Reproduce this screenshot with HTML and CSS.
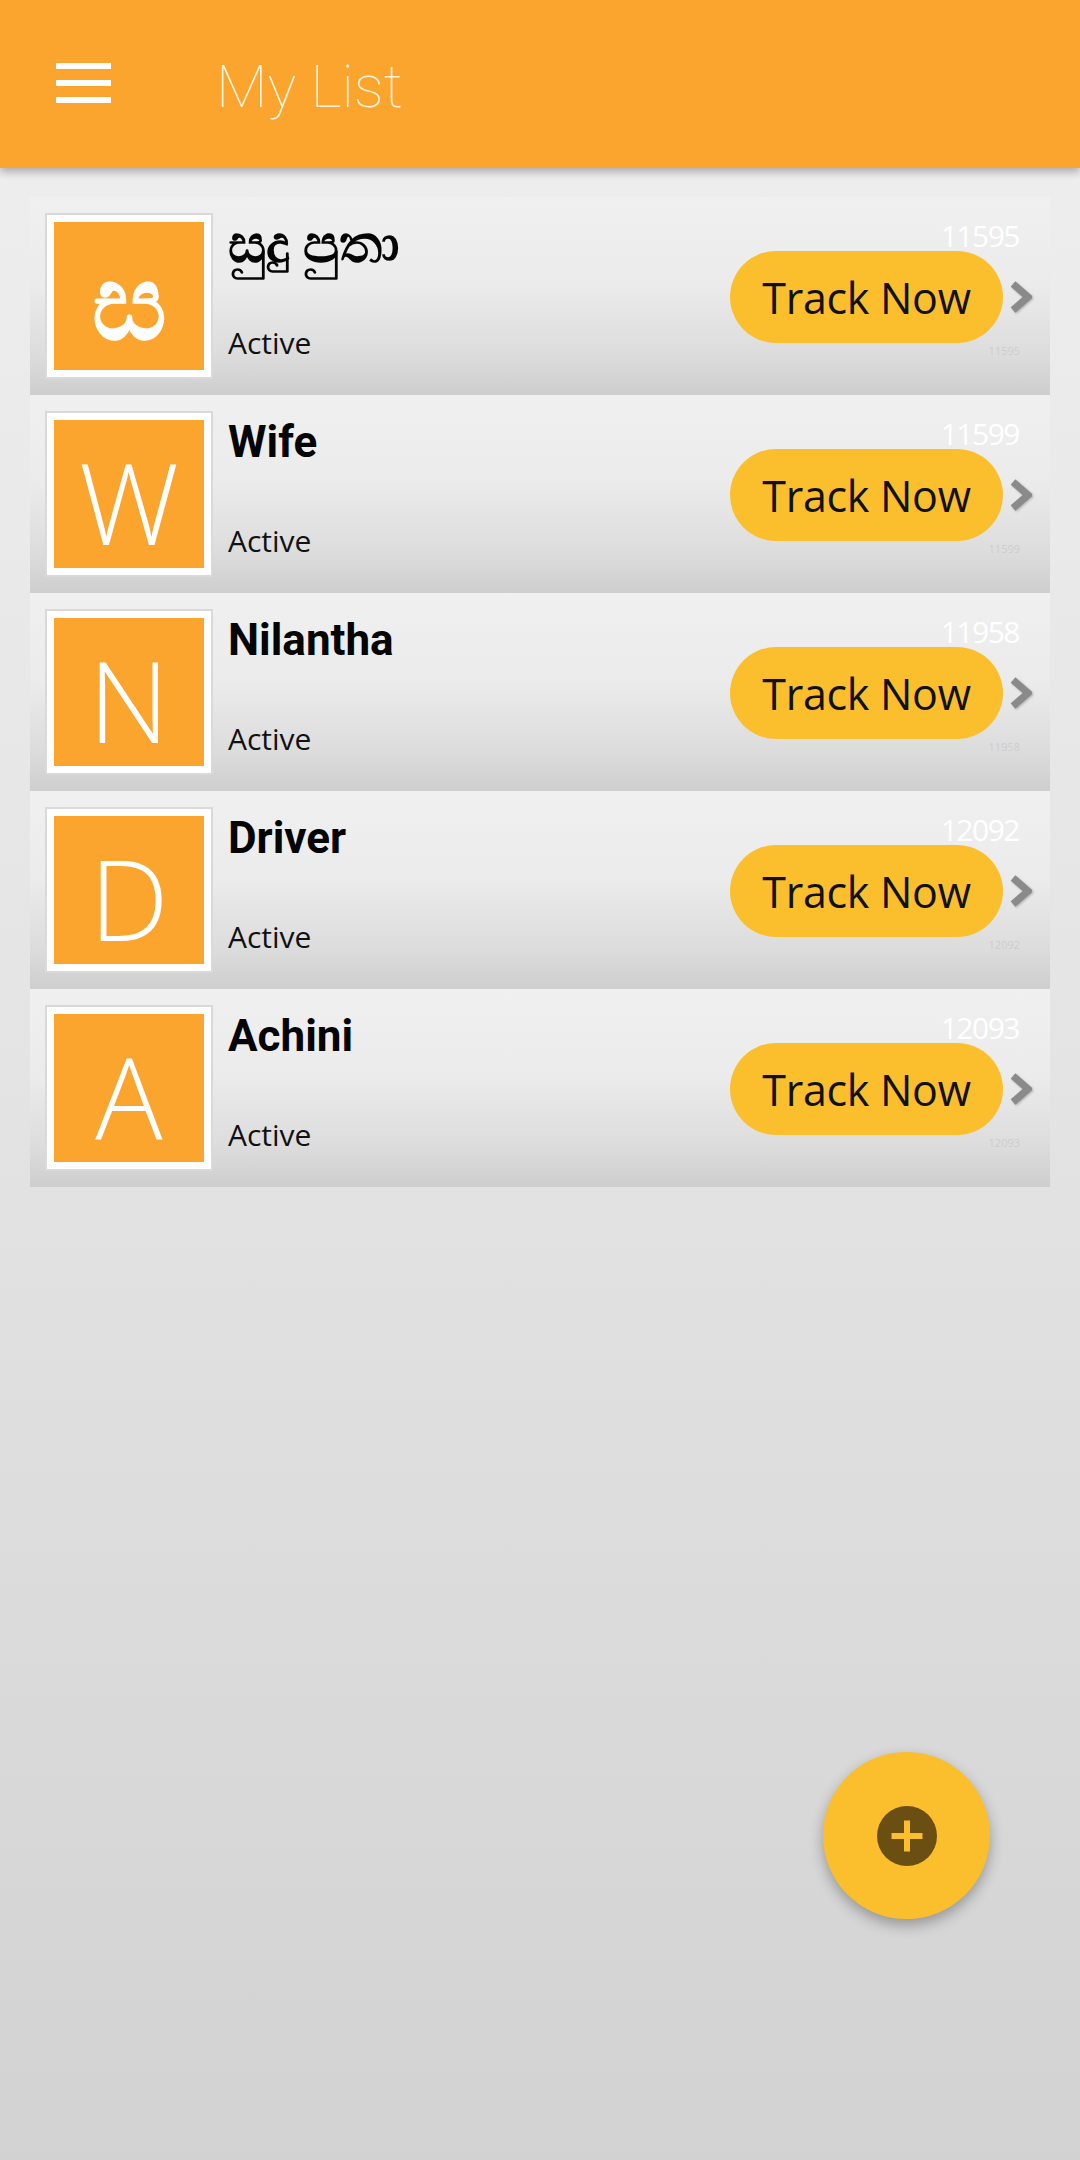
FILE: index.html
```html
<!DOCTYPE html>
<html lang="si">
<head>
<meta charset="utf-8">
<title>My List</title>
<link rel="stylesheet" href="styles.css">
</head>
<body>
<header class="appbar">
  <div class="menu" aria-label="Menu"><span></span><span></span><span></span></div>
  <h1 class="title">My List</h1>
</header>

<main class="list">
  <div class="row">
    <div class="avatar"><div class="avatar-inner avatar-si">ස</div></div>
    <div class="info">
      <div class="name name-si">සුදු පුතා</div>
      <div class="status">Active</div>
    </div>
    <div class="actions">
      <div class="num"><span>11595</span></div>
      <div class="btnrow">
        <button class="track">Track Now</button>
        <svg class="chev" viewBox="0 0 22 32" width="22" height="32"><polyline points="3,3 18,16 3,29" fill="none" stroke="#8a8a8a" stroke-width="7" stroke-linejoin="miter"/></svg>
      </div>
      <div class="tiny">11595</div>
    </div>
  </div>

  <div class="row">
    <div class="avatar"><div class="avatar-inner">W</div></div>
    <div class="info">
      <div class="name">Wife</div>
      <div class="status">Active</div>
    </div>
    <div class="actions">
      <div class="num"><span>11599</span></div>
      <div class="btnrow">
        <button class="track">Track Now</button>
        <svg class="chev" viewBox="0 0 22 32" width="22" height="32"><polyline points="3,3 18,16 3,29" fill="none" stroke="#8a8a8a" stroke-width="7" stroke-linejoin="miter"/></svg>
      </div>
      <div class="tiny">11599</div>
    </div>
  </div>

  <div class="row">
    <div class="avatar"><div class="avatar-inner">N</div></div>
    <div class="info">
      <div class="name">Nilantha</div>
      <div class="status">Active</div>
    </div>
    <div class="actions">
      <div class="num"><span>11958</span></div>
      <div class="btnrow">
        <button class="track">Track Now</button>
        <svg class="chev" viewBox="0 0 22 32" width="22" height="32"><polyline points="3,3 18,16 3,29" fill="none" stroke="#8a8a8a" stroke-width="7" stroke-linejoin="miter"/></svg>
      </div>
      <div class="tiny">11958</div>
    </div>
  </div>

  <div class="row">
    <div class="avatar"><div class="avatar-inner">D</div></div>
    <div class="info">
      <div class="name">Driver</div>
      <div class="status">Active</div>
    </div>
    <div class="actions">
      <div class="num"><span>12092</span></div>
      <div class="btnrow">
        <button class="track">Track Now</button>
        <svg class="chev" viewBox="0 0 22 32" width="22" height="32"><polyline points="3,3 18,16 3,29" fill="none" stroke="#8a8a8a" stroke-width="7" stroke-linejoin="miter"/></svg>
      </div>
      <div class="tiny">12092</div>
    </div>
  </div>

  <div class="row">
    <div class="avatar"><div class="avatar-inner">A</div></div>
    <div class="info">
      <div class="name">Achini</div>
      <div class="status">Active</div>
    </div>
    <div class="actions">
      <div class="num"><span>12093</span></div>
      <div class="btnrow">
        <button class="track">Track Now</button>
        <svg class="chev" viewBox="0 0 22 32" width="22" height="32"><polyline points="3,3 18,16 3,29" fill="none" stroke="#8a8a8a" stroke-width="7" stroke-linejoin="miter"/></svg>
      </div>
      <div class="tiny">12093</div>
    </div>
  </div>
</main>

<button class="fab" aria-label="Add">
  <svg viewBox="0 0 60 60" width="60" height="60">
    <circle cx="30" cy="30" r="30" fill="#6b4f12"/>
    <rect x="14.5" y="27" width="31" height="6" fill="#fbbf2e"/>
    <rect x="27" y="14.5" width="6" height="31" fill="#fbbf2e"/>
  </svg>
</button>
</body>
</html>
```

FILE: styles.css
```css
* { box-sizing: border-box; }

html, body {
  margin: 0;
  padding: 0;
}

body {
  width: 1080px;
  min-height: 2160px;
  position: relative;
  background: linear-gradient(to bottom, #efefef 0%, #e4e4e4 50%, #d2d2d2 100%);
  font-family: "Open Sans", "Liberation Sans", sans-serif;
  color: #111;
}

.appbar {
  height: 168px;
  background: #fba52e;
  display: flex;
  align-items: center;
  padding-left: 56px;
  box-shadow: 0 4px 8px rgba(0, 0, 0, 0.28);
  position: relative;
  z-index: 2;
}

.menu {
  width: 55px;
  display: flex;
  flex-direction: column;
  gap: 11px;
  margin-top: -2px;
}

.menu span {
  display: block;
  height: 6px;
  background: #fff;
}

.title {
  margin: 6px 0 0 105px;
  font-family: Roboto, "Liberation Sans", sans-serif;
  font-weight: 100;
  font-size: 60px;
  line-height: 1;
  color: #fdf4de;
}

.list {
  margin: 29px 30px 0 30px;
  display: flex;
  flex-direction: column;
}

.row {
  height: 198px;
  display: flex;
  padding: 16px 18px 16px 15px;
  background: linear-gradient(to bottom, #f0f0f0 0%, #ebebeb 45%, #dcdcdc 80%, #cecece 100%);
}

.avatar {
  width: 168px;
  height: 166px;
  border: 2px solid #d9d9d9;
  background: #fff;
  padding: 7px;
  flex: none;
}

.avatar-inner {
  width: 100%;
  height: 100%;
  background: #fba52e;
  color: #fff;
  display: flex;
  align-items: center;
  justify-content: center;
  font-family: "Open Sans", "Liberation Sans", sans-serif;
  font-weight: 300;
  font-size: 112px;
  line-height: 1;
  padding-top: 16px;
}

.avatar-si {
  font-weight: 700;
  font-size: 104px;
  padding-top: 6px;
}

.info {
  flex: 1;
  margin-left: 15px;
  padding-top: 5px;
}

.name {
  font-family: Roboto, "Liberation Sans", sans-serif;
  font-weight: 700;
  font-size: 44px;
  line-height: 52px;
  color: #050505;
}

.name-si {
  font-size: 53px;
  font-weight: 900;
}

.status {
  margin-top: 55px;
  font-size: 30px;
  line-height: 36px;
  color: #111;
}

.actions {
  width: 302px;
  display: flex;
  flex-direction: column;
  flex: none;
}

.num {
  height: 38px;
  display: flex;
  align-items: flex-end;
  justify-content: flex-end;
  padding-right: 13px;
}

.num span {
  font-size: 30px;
  line-height: 30px;
  color: #fff;
  letter-spacing: -1.5px;
}

.btnrow {
  height: 92px;
  display: flex;
  align-items: center;
  gap: 7px;
}

.track {
  width: 273px;
  height: 92px;
  border: none;
  border-radius: 46px;
  background: #fbbf2e;
  color: #111;
  font-family: "Open Sans", "Liberation Sans", sans-serif;
  font-size: 43px;
  font-weight: 400;
  padding: 0;
  letter-spacing: -0.3px;
}

.chev {
  flex: none;
  filter: drop-shadow(1px 1px 1px rgba(0, 0, 0, 0.25));
}

.tiny {
  padding-right: 12px;
  text-align: right;
  font-size: 11px;
  line-height: 16px;
  color: #cdcdcd;
}

.fab {
  position: absolute;
  left: 823px;
  top: 1752px;
  width: 167px;
  height: 167px;
  border-radius: 50%;
  border: none;
  padding: 0;
  background: #fbbf2e;
  box-shadow: 0 6px 14px rgba(0, 0, 0, 0.3);
  display: flex;
  align-items: center;
  justify-content: center;
}
```
